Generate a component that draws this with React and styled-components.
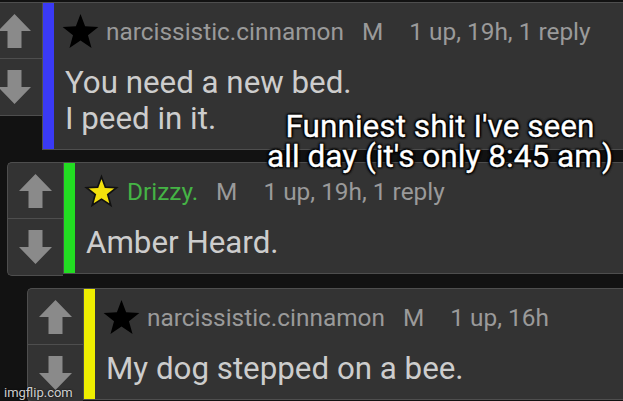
import React from 'react';
import styled, { createGlobalStyle } from 'styled-components';

const GlobalStyle = createGlobalStyle`
  html, body {
    margin: 0;
    padding: 0;
    background: #121212;
  }
  * {
    box-sizing: border-box;
  }
`;

const comments = [
  {
    indent: -14,
    bar: '#3a3af5',
    star: 'black',
    name: 'narcissistic.cinnamon',
    stats: '1 up, 19h, 1 reply',
    lines: ['You need a new bed.', 'I peed in it.'],
  },
  {
    indent: 7,
    bar: '#22dd22',
    star: 'gold',
    name: 'Drizzy.',
    nameColor: '#45b445',
    stats: '1 up, 19h, 1 reply',
    lines: ['Amber Heard.'],
  },
  {
    indent: 27,
    bar: '#eeee00',
    star: 'black',
    name: 'narcissistic.cinnamon',
    stats: '1 up, 16h',
    lines: ['My dog stepped on a bee.'],
  },
];

const STAR = '12,0.6 15,8.67 23.6,9.03 16.85,14.38 19.17,22.67 12,17.9 4.83,22.67 7.15,14.38 0.4,9.03 9,8.67';

function Star({ kind }) {
  const gold = kind === 'gold';
  return (
    <StarIcon viewBox="0 0 24 24" width="37" height="37">
      <polygon
        points={STAR}
        fill={gold ? '#f4e10c' : '#000'}
        stroke={gold ? '#111' : 'none'}
        strokeWidth={gold ? 1.3 : 0}
        transform={gold ? 'translate(12 12) scale(0.84) translate(-12 -12)' : undefined}
      />
    </StarIcon>
  );
}

function Arrow({ down }) {
  return (
    <svg viewBox="0 0 33 34" width="33" height="34" style={down ? { transform: 'scaleY(-1)' } : undefined}>
      <path d="M16.5 0 L33 17 L23.5 17 L23.5 34 L9.5 34 L9.5 17 L0 17 Z" fill="#8a8a8a" />
    </svg>
  );
}

function Comment({ c }) {
  return (
    <Row $indent={c.indent}>
      <VoteBox>
        <VoteBtn $top>
          <Arrow />
        </VoteBtn>
        <VoteBtn>
          <Arrow down />
        </VoteBtn>
      </VoteBox>
      <Card>
        <Bar $color={c.bar} />
        <Content>
          <Header>
            <Star kind={c.star} />
            <Name $color={c.nameColor}>{c.name}</Name>
            <Meta $gap={18}>M</Meta>
            <Meta $gap={26}>{c.stats}</Meta>
          </Header>
          <Body>
            {c.lines.map((l, i) => (
              <div key={i}>{l}</div>
            ))}
          </Body>
        </Content>
      </Card>
    </Row>
  );
}

export default function App() {
  return (
    <>
      <GlobalStyle />
      <Page>
        <Thread>
          {comments.map((c, i) => (
            <Comment c={c} key={i} />
          ))}
        </Thread>
        <Caption>
          Funniest shit I've seen
          <br />
          all day (it's only 8:45 am)
        </Caption>
        <Watermark>imgflip.com</Watermark>
      </Page>
    </>
  );
}

const Page = styled.div`
  position: relative;
  width: 623px;
  height: 401px;
  overflow: hidden;
  background: #121212;
  font-family: Roboto, 'Liberation Sans', sans-serif;
`;

const Thread = styled.div`
  display: flex;
  flex-direction: column;
  gap: 12px;
  padding-top: 2px;
`;

const Row = styled.div`
  display: flex;
  align-items: flex-start;
  margin-left: ${(p) => p.$indent}px;
  margin-right: -12px;
`;

const VoteBox = styled.div`
  flex-shrink: 0;
  width: 56px;
  display: flex;
  flex-direction: column;
  background: #333333;
  border: 1px solid #4e4e4e;
  border-right: none;
  border-radius: 5px 0 0 5px;
`;

const VoteBtn = styled.div`
  height: 56px;
  display: flex;
  align-items: center;
  justify-content: center;
  border-bottom: ${(p) => (p.$top ? '1px solid #4e4e4e' : 'none')};
`;

const Card = styled.div`
  flex: 1;
  min-width: 0;
  display: flex;
  background: #333333;
  border: 1px solid #4e4e4e;
`;

const Bar = styled.div`
  width: 11px;
  flex-shrink: 0;
  background: ${(p) => p.$color};
`;

const Content = styled.div`
  flex: 1;
  padding: 8px 0 12px 8px;
`;

const Header = styled.div`
  display: flex;
  align-items: center;
  height: 40px;
  white-space: nowrap;
`;

const StarIcon = styled.svg`
  flex-shrink: 0;
`;

const Name = styled.span`
  margin-left: 7px;
  font-size: 24.4px;
  color: ${(p) => p.$color || '#9a9a9a'};
`;

const Meta = styled.span`
  margin-left: ${(p) => p.$gap}px;
  font-size: 24.4px;
  color: #9a9a9a;
`;

const Body = styled.div`
  margin-top: 14px;
  padding-left: 3px;
  font-size: 31.3px;
  line-height: 36px;
  color: #cdcdcd;
  white-space: nowrap;
`;

const Caption = styled.div`
  position: absolute;
  top: 112px;
  left: 240px;
  width: 400px;
  text-align: center;
  white-space: nowrap;
  font-size: 31.6px;
  line-height: 30px;
  color: #ffffff;
  -webkit-text-stroke: 0.3px #fff;
  text-shadow: 0 0 3px #000, 0 0 3px #000, 1px 1px 2px #000, -1px -1px 2px #000, 1px -1px 2px #000,
    -1px 1px 2px #000;
`;

const Watermark = styled.div`
  position: absolute;
  left: 4px;
  bottom: 1px;
  font-size: 13px;
  color: rgba(255, 255, 255, 0.8);
  text-shadow: 0 0 2px #000;
`;
